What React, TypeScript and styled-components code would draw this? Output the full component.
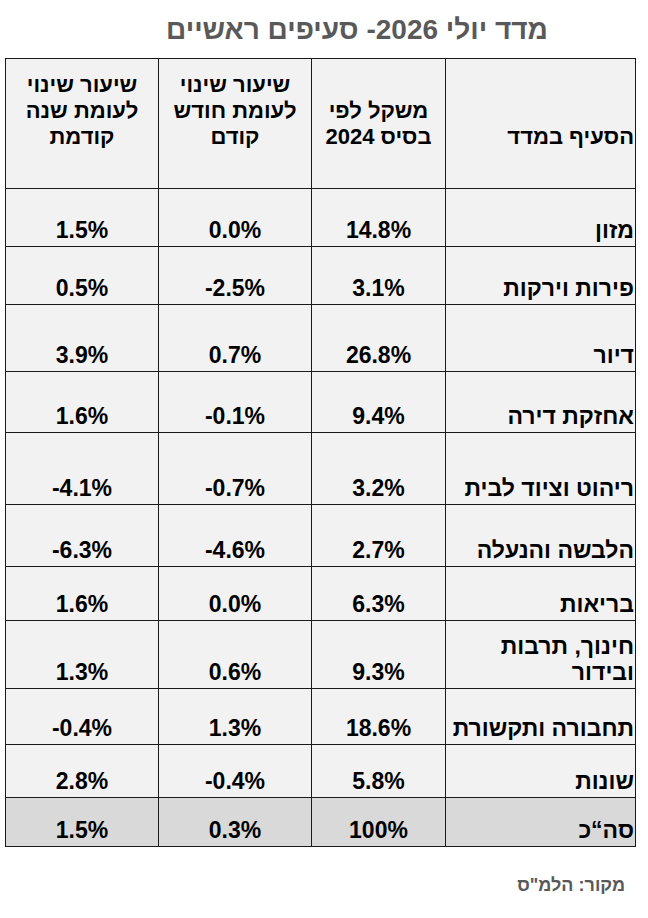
import React from "react";
import styled, { createGlobalStyle } from "styled-components";

const GlobalStyle = createGlobalStyle`
  html, body {
    margin: 0;
    padding: 0;
    background: #ffffff;
  }
  body {
    font-family: "Liberation Sans", Arial, sans-serif;
  }
`;

// Page layout
const Page = styled.div`
  width: 648px;
  height: 918px;
  direction: rtl;
  box-sizing: border-box;
  padding: 0 12px 0 6px;
`;

const Title = styled.h1`
  margin: 0;
  height: 58px;
  box-sizing: border-box;
  padding: 13px 0 0 72px;
  text-align: center;
  font-size: 28px;
  font-weight: bold;
  color: #595959;
  line-height: 34px;
`;

const Table = styled.table`
  width: 630px;
  border-collapse: collapse;
  table-layout: fixed;
  border: 1px solid #555;
  font-size: 23px;
  font-weight: bold;
  color: #000;
`;

const Row = styled.tr<{ total?: boolean }>`
  background-color: ${({ total }) => (total ? "#d9d9d9" : "#f2f2f2")};
`;

const HeadCell = styled.th<{ align?: string }>`
  height: 130px;
  box-sizing: border-box;
  padding: 0 1px 38px;
  border: 1px solid #1a1a1a;
  vertical-align: bottom;
  text-align: ${({ align }) => align || "center"};
  font-size: 22px;
  line-height: 26px;
  font-weight: bold;
`;

const Cell = styled.td<{ label?: boolean }>`
  box-sizing: border-box;
  padding: 0 1px 3px;
  border: 1px solid #1a1a1a;
  vertical-align: bottom;
  text-align: ${({ label }) => (label ? "right" : "center")};
  direction: ${({ label }) => (label ? "rtl" : "ltr")};
  line-height: 26px;
`;

const Source = styled.div`
  margin-top: 28px;
  padding-right: 11px;
  font-size: 18px;
  font-weight: bold;
  color: #595959;
`;

type IndexRow = {
  name: string;
  weight: string;
  monthly: string;
  yearly: string;
  height: number;
};

const rows: IndexRow[] = [
  { name: "מזון", weight: "14.8%", monthly: "0.0%", yearly: "1.5%", height: 58 },
  { name: "פירות וירקות", weight: "3.1%", monthly: "-2.5%", yearly: "0.5%", height: 58 },
  { name: "דיור", weight: "26.8%", monthly: "0.7%", yearly: "3.9%", height: 67 },
  { name: "אחזקת דירה", weight: "9.4%", monthly: "-0.1%", yearly: "1.6%", height: 61 },
  { name: "ריהוט וציוד לבית", weight: "3.2%", monthly: "-0.7%", yearly: "-4.1%", height: 72 },
  { name: "הלבשה והנעלה", weight: "2.7%", monthly: "-4.6%", yearly: "-6.3%", height: 62 },
  { name: "בריאות", weight: "6.3%", monthly: "0.0%", yearly: "1.6%", height: 54 },
  { name: "חינוך, תרבות ובידור", weight: "9.3%", monthly: "0.6%", yearly: "1.3%", height: 68 },
  { name: "תחבורה ותקשורת", weight: "18.6%", monthly: "1.3%", yearly: "-0.4%", height: 56 },
  { name: "שונות", weight: "5.8%", monthly: "-0.4%", yearly: "2.8%", height: 53 },
];

const App: React.FC = () => {
  return (
    <Page>
      <GlobalStyle />
      <Title>מדד יולי 2026- סעיפים ראשיים</Title>
      <Table>
        <colgroup>
          <col style={{ width: 190 }} />
          <col style={{ width: 134 }} />
          <col style={{ width: 153 }} />
          <col style={{ width: 153 }} />
        </colgroup>
        <thead>
          <Row>
            <HeadCell align="right">הסעיף במדד</HeadCell>
            <HeadCell>
              משקל לפי
              <br />
              בסיס 2024
            </HeadCell>
            <HeadCell>
              שיעור שינוי
              <br />
              לעומת חודש
              <br />
              קודם
            </HeadCell>
            <HeadCell>
              שיעור שינוי
              <br />
              לעומת שנה
              <br />
              קודמת
            </HeadCell>
          </Row>
        </thead>
        <tbody>
          {rows.map((r) => (
            <Row key={r.name} style={{ height: r.height }}>
              <Cell label>{r.name}</Cell>
              <Cell>{r.weight}</Cell>
              <Cell>{r.monthly}</Cell>
              <Cell>{r.yearly}</Cell>
            </Row>
          ))}
          <Row total style={{ height: 49 }}>
            <Cell label>סה“כ</Cell>
            <Cell>100%</Cell>
            <Cell>0.3%</Cell>
            <Cell>1.5%</Cell>
          </Row>
        </tbody>
      </Table>
      <Source>מקור: הלמ"ס</Source>
    </Page>
  );
};

export default App;
